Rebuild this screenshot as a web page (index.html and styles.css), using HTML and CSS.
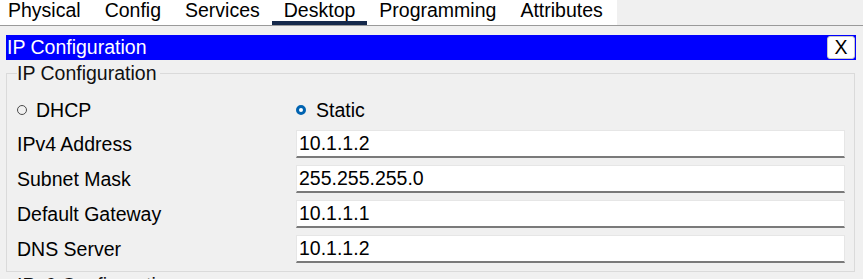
FILE: index.html
```html
<!DOCTYPE html>
<html>
<head>
<title>Desktop - IP Configuration</title>
<meta charset="utf-8" />
<link rel="stylesheet" href="styles.css">
</head>

<body>

<div class="tabbar">
	<ul class="tabs">
		<li class="tab">Physical</li>
		<li class="tab">Config</li>
		<li class="tab">Services</li>
		<li class="tab active">Desktop</li>
		<li class="tab">Programming</li>
		<li class="tab">Attributes</li>
	</ul>
</div>

<div class="content">

	<div class="titlebar">
		<span class="title">IP Configuration</span>
		<button class="close" type="button">X</button>
	</div>

	<fieldset class="group">

		<legend>IP Configuration</legend>

		<div class="row mode">
			<label class="radio"><span class="dot"></span>DHCP</label>
			<label class="radio checked"><span class="dot"></span>Static</label>
		</div>

		<div class="row">
			<label class="name" for="ipv4">IPv4 Address</label>
			<input class="field" type="text" id="ipv4" value="10.1.1.2" />
		</div>

		<div class="row">
			<label class="name" for="mask">Subnet Mask</label>
			<input class="field" type="text" id="mask" value="255.255.255.0" />
		</div>

		<div class="row">
			<label class="name" for="gateway">Default Gateway</label>
			<input class="field" type="text" id="gateway" value="10.1.1.1" />
		</div>

		<div class="row">
			<label class="name" for="dns">DNS Server</label>
			<input class="field" type="text" id="dns" value="10.1.1.2" />
		</div>

	</fieldset>

	<fieldset class="group">
		<legend>IPv6 Configuration</legend>
		<div class="row"></div>
	</fieldset>

</div>

</body>
</html>
```

FILE: styles.css
```css
html, body {
	overflow: hidden;
}

body {
	margin: 0;
	padding: 0;
	background: #f0f0f0;
	color: #000;
	font: 19.5px "Liberation Sans", Arial, sans-serif;
}

.tabbar {
	border-bottom: 1px solid #9a9a9a;
}

.tabs {
	display: flex;
	margin: 0;
	padding: 0;
	list-style: none;
	width: 617px;
	background: #fff;
}

.tab {
	height: 21px;
	padding: 0 12px 4px 12px;
	line-height: 21px;
	white-space: nowrap;
}

.tab:first-child {
	padding-left: 8px;
}

.tab.active {
	padding-bottom: 0;
	border-bottom: 4px solid #15294b;
}

.content {
	padding: 9px 7px 0 6px;
}

.titlebar {
	display: flex;
	align-items: center;
	justify-content: space-between;
	height: 25px;
	background: #0000ff;
	color: #fff;
}

.title {
	padding-left: 1px;
	line-height: 25px;
}

.close {
	width: 28px;
	height: 23px;
	margin-right: 1px;
	padding: 0;
	border: 1px solid #c8c8c8;
	border-radius: 3px;
	background: #fff;
	color: #000;
	font: 19.5px "Liberation Sans", Arial, sans-serif;
	line-height: 21px;
}

.group {
	margin: 2px 1px 0 0;
	padding: 2px 9px 8px 10px;
	border: 1px solid #dadada;
}

.group legend {
	padding: 0 4px 0 0;
	line-height: 22px;
	color: #111;
}

.row {
	display: flex;
	align-items: center;
	height: 28px;
	margin-top: 7px;
}

.mode {
	height: 26px;
	margin-top: 11px;
}

.radio {
	display: flex;
	align-items: center;
	width: 279px;
}

.dot {
	width: 8px;
	height: 8px;
	margin-right: 9px;
	border: 1px solid #4a4a4a;
	border-radius: 50%;
}

.radio.checked .dot {
	width: 4px;
	height: 4px;
	border: 3px solid #0063b1;
	background: #fff;
	margin-right: 10px;
}

.name {
	width: 279px;
}

.field {
	flex: 1;
	box-sizing: border-box;
	height: 28px;
	padding: 0 2px;
	border: 1px solid #e6e6e6;
	border-bottom: 2px solid #7a7a7a;
	background: #fff;
	color: #000;
	font: 19.5px "Liberation Sans", Arial, sans-serif;
}
```
